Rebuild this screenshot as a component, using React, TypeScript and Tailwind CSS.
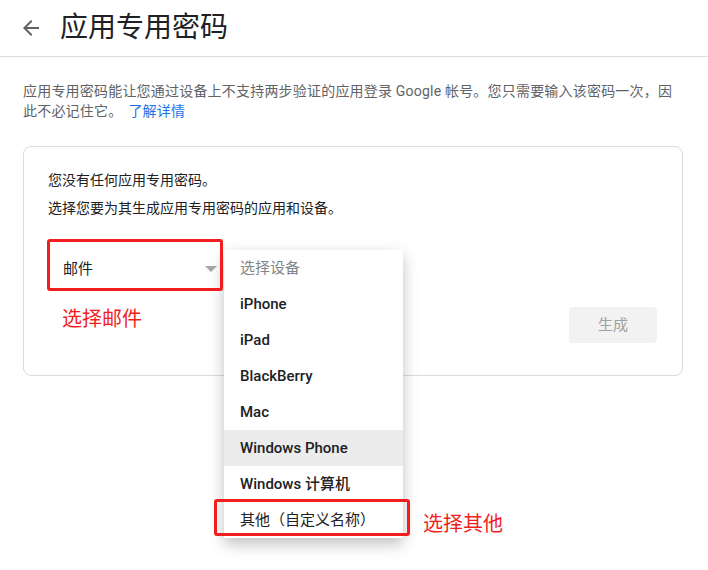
import React from 'react';

const font = { fontFamily: 'Roboto, "Noto Sans CJK SC", sans-serif' };

interface DeviceItem {
    label: string;
    cjk?: boolean;
}

const devices: DeviceItem[] = [
    { label: 'iPhone' },
    { label: 'iPad' },
    { label: 'BlackBerry' },
    { label: 'Mac' },
    { label: 'Windows Phone' },
    { label: 'Windows 计算机' },
    { label: '其他（自定义名称）', cjk: true },
];

const App: React.FC = () => {
    return (
        <div className="relative w-[708px] h-[570px] bg-white overflow-hidden" style={font}>
            {/* header */}
            <div className="flex items-center h-[57px] border-b border-[#dadce0] pl-[19px]">
                <svg width="24" height="24" viewBox="0 0 24 24" className="text-[#5f6368]">
                    <path d="M20 11H7.83l5.59-5.59L12 4l-8 8 8 8 1.41-1.41L7.83 13H20v-2z" fill="currentColor" />
                </svg>
                <h1 className="ml-[17px] text-[28px] leading-none text-[#202124] -mt-[1px]">应用专用密码</h1>
            </div>

            <p className="px-[23px] pt-[24px] text-[14px] leading-[20px] text-[#5f6368] tracking-[0.2px]">
                应用专用密码能让您通过设备上不支持两步验证的应用登录 Google 帐号。您只需要输入该密码一次，因
                <br />
                此不必记住它。
                <span className="text-[#1a73e8] ml-[6px]">了解详情</span>
            </p>

            {/* card */}
            <div className="ml-[23px] w-[660px] mt-[25px] h-[230px] border border-[#dadce0] rounded-[8px] pl-[24px] pr-[25px] pt-[23px]">
                <p className="text-[14px] leading-[20px] text-[#202124]">您没有任何应用专用密码。</p>
                <p className="mt-[8px] text-[14px] leading-[20px] text-[#202124]">选择您要为其生成应用专用密码的应用和设备。</p>
                <div className="flex mt-[27px]">
                    <div className="w-[172px] h-[48px] flex items-center justify-between pl-[15px] pr-[3px]">
                        <span className="text-[15px] text-[#202124]">邮件</span>
                        <span className="w-0 h-0 border-l-[6px] border-r-[6px] border-t-[6px] border-l-transparent border-r-transparent border-t-[#a8a8a8]" />
                    </div>
                </div>
                <div className="flex justify-end mt-[14px]">
                    <div className="w-[88px] h-[36px] bg-[#f2f2f2] rounded-[4px] flex items-center justify-center text-[15px] text-[#a0a0a0]">
                        生成
                    </div>
                </div>
            </div>

            {/* dropdown menu */}
            <div className="absolute left-[224px] top-[250px] w-[179px] bg-white shadow-[0_6px_14px_rgba(0,0,0,0.25)]">
                <div className="h-[36px] flex items-center pl-[16px] text-[15px] text-[#80868b]">选择设备</div>
                {devices.map(d => (
                    <div
                        key={d.label}
                        className={
                            'h-[36px] flex items-center pl-[16px] text-[15px] text-[#202124] ' +
                            (d.cjk ? 'font-normal ' : 'font-medium ') +
                            (d.label === 'Windows Phone' ? 'bg-[#ececec]' : '')
                        }
                    >
                        {d.label}
                    </div>
                ))}
            </div>

            {/* annotations */}
            <div className="absolute left-[47px] top-[239px] w-[176px] h-[52px] border-[3px] border-[#f21d1d] rounded-[3px]" />
            <div className="absolute left-[62px] top-[306px] text-[20px] leading-[26px] text-[#f21d1d]">选择邮件</div>
            <div className="absolute left-[214px] top-[499px] w-[196px] h-[37px] border-[3px] border-[#f21d1d] rounded-[3px]" />
            <div className="absolute left-[423px] top-[511px] text-[20px] leading-[26px] text-[#f21d1d]">选择其他</div>
        </div>
    );
};

export default App;
